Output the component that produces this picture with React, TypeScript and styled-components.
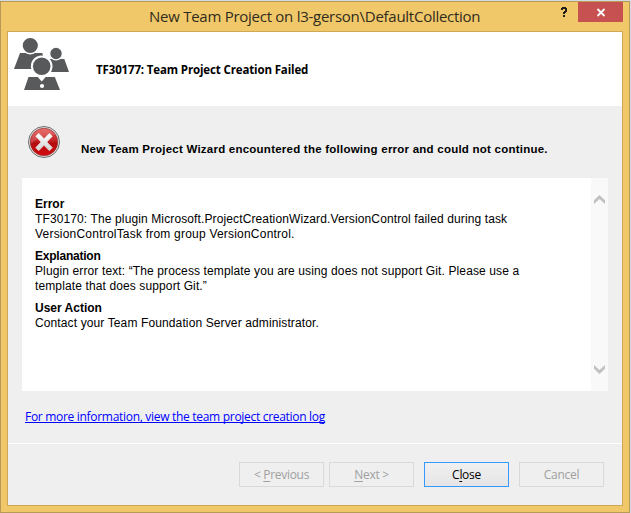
import React from "react";
import styled, { createGlobalStyle, css } from "styled-components";

const GlobalStyle = createGlobalStyle`
  * { box-sizing: border-box; }
  body { margin: 0; overflow: hidden; }
`;

const uiFont = css`font-family: "Open Sans", "Noto Sans", sans-serif;`;
const textFont = css`font-family: "Liberation Sans", Arial, sans-serif;`;

const Desktop = styled.div`
  width: 631px;
  height: 513px;
  padding: 1px 1px 0 0;
  background: #d5d9e0;
`;

const Window = styled.div`
  display: flex;
  flex-direction: column;
  height: 512px;
  padding: 0 6px 6px;
  border: 1px solid #b69a55;
  background: #f0c869;
`;

const TitleBar = styled.div`
  ${uiFont}
  display: flex;
  height: 29px;
  flex: none;
  color: #302b20;
`;

const Title = styled.h1`
  flex: 1;
  margin: 0;
  padding: 4px 0 0 142px;
  font-size: 15px;
  font-weight: 400;
  line-height: 21px;
  letter-spacing: -0.265px;
  white-space: nowrap;
`;

const HelpButton = styled.button`
  width: 28px;
  height: 20px;
  padding: 0;
  border: 0;
  background: none;
  line-height: 0;
`;

const CloseBox = styled.button`
  width: 45px;
  height: 20px;
  padding: 0;
  border: 0;
  background: #c75050;
  line-height: 0;
`;

const Client = styled.div`
  display: flex;
  flex: 1;
  flex-direction: column;
  border: 1px solid #cda956;
  background: #efefef;
`;

const Header = styled.header`
  display: flex;
  height: 74px;
  flex: none;
  background: #fff;
`;

const HeaderTitle = styled.h2`
  ${uiFont}
  margin: 0;
  padding: 28px 0 0 26px;
  font-size: 11.5px;
  font-weight: 700;
  line-height: 20px;
  letter-spacing: -0.14px;
  color: #000;
`;

const Message = styled.div`
  ${textFont}
  display: flex;
  height: 72px;
  flex: none;
  padding: 19px 0 0 19px;
  font-size: 11.5px;
  letter-spacing: 0.235px;
  font-weight: 700;
  line-height: 16px;
  white-space: nowrap;
`;

const MessageText = styled.p`
  margin: 0;
  padding: 16px 0 0 20px;
`;

const Panel = styled.section`
  display: flex;
  height: 213px;
  flex: none;
  margin: 0 14px;
  background: #fff;
`;

const Details = styled.div`
  ${textFont}
  flex: 1;
  padding: 19px 0 0 13px;
  font-size: 12px;
  line-height: 15px;
  color: #000;
  white-space: nowrap;
`;

const DetailBlock = styled.div`
  margin-bottom: 7px;
`;

const DetailHeading = styled.h3<{ $tight?: boolean }>`
  margin: 0;
  font-size: 12px;
  letter-spacing: ${(p) => (p.$tight ? "-0.22px" : "0")};
`;

const DetailLine = styled.p<{ $loose?: boolean }>`
  margin: 0;
  letter-spacing: ${(p) => (p.$loose ? "0.21px" : "0.12px")};
`;

const ScrollBar = styled.div`
  display: flex;
  width: 17px;
  flex-direction: column;
  justify-content: space-between;
  align-items: center;
  padding: 17px 0;
  background: #f9f9f9;
`;

const LinkRow = styled.div`
  ${uiFont}
  height: 52px;
  flex: none;
  padding: 17px 0 0 17px;
  font-size: 12px;
  line-height: 18px;
`;

const LogLink = styled.a`
  color: #0000ff;
  letter-spacing: -0.3px;
  text-decoration: underline;
  text-decoration-skip-ink: none;
  text-underline-offset: 1px;
  text-decoration-thickness: 1px;
`;

const Footer = styled.footer`
  display: flex;
  flex: 1;
  padding: 18px 18px 0 231px;
  border-top: 1px solid #fff;
`;

const Button = styled.button<{ $primary?: boolean; $gap?: number }>`
  ${uiFont}
  width: 85px;
  height: 25px;
  flex: none;
  margin: 0 0 0 ${(p) => p.$gap ?? 0}px;
  padding: 0;
  border: 1px solid ${(p) => (p.$primary ? "#3399ff" : "#d9d9d9")};
  background: ${(p) => (p.$primary ? "linear-gradient(#f0f0f0, #e5e5e5)" : "#efefef")};
  color: ${(p) => (p.$primary ? "#000" : "#a0a0a0")};
  font-size: 12px;
  line-height: 23px;
  letter-spacing: -0.3px;
`;

const Mnemonic = styled.span`
  text-decoration: underline;
  text-decoration-skip-ink: none;
  text-underline-offset: 2px;
  text-decoration-thickness: 1px;
`;

const TeamIcon = () => (
  <svg width="62" height="74" viewBox="8 32 62 74" fill="#58595b">
    <path d="M20 53h22.2l1 3-8 13H14z" />
    <path d="M49 59h15.3L69 72H51z" />
    <g stroke="#fff" strokeWidth="1.4">
      <circle cx="30.3" cy="45.5" r="8.3" />
      <circle cx="56" cy="53.5" r="6.4" />
    </g>
    <circle cx="41.7" cy="66.2" r="10.8" fill="#fff" />
    <circle cx="41.7" cy="66.2" r="8.8" />
    <path d="M28.5 77h9.2l4 4.4 4-4.4h9.1l5.2 13H24z" />
    <circle cx="42" cy="86" r="2.1" fill="#fff" />
  </svg>
);

const ErrorIcon = () => (
  <svg width="34" height="34" viewBox="0 0 34 34">
    <defs>
      <linearGradient id="errorRed" x1="0" y1="0" x2="0" y2="1">
        <stop offset="0" stopColor="#e2534f" />
        <stop offset=".45" stopColor="#c52225" />
        <stop offset=".55" stopColor="#b20b0e" />
        <stop offset="1" stopColor="#d40b10" />
      </linearGradient>
      <linearGradient id="errorCross" x1="0" y1="0" x2="0" y2="1">
        <stop offset="0" stopColor="#fff" />
        <stop offset="1" stopColor="#d2d2d2" />
      </linearGradient>
    </defs>
    <circle cx="17" cy="17" r="15.5" fill="#e7e7e7" stroke="#6d6d6d" />
    <circle cx="17" cy="17" r="13.8" fill="url(#errorRed)" stroke="#8d3032" strokeWidth=".6" />
    <path d="M4.4 19C2.5 10.4 9 4 17 4c5 0 9 2.3 11.3 6C20 10 10 12 4.4 19z" fill="#fff" opacity=".16" />
    <path
      d="M8.7 11.2l3-2.9 5.3 5.3 5.4-5.3 3 2.9-5.5 5.8 5.5 5.7-3 3-5.4-5.4-5.3 5.4-3-3 5.3-5.7z"
      fill="url(#errorCross)"
      stroke="#e6d6d6"
      strokeWidth=".7"
      strokeLinejoin="round"
    />
  </svg>
);

const HelpIcon = () => (
  <svg width="28" height="20" viewBox="0 0 28 20" fill="#221f18" shapeRendering="crispEdges">
    <path d="M12 5h4v1h1v4h-1v1h-1v1h-2v-2h1v-1h1V7h-2v1h-2V6h1zM13 13h2v2h-2z" />
  </svg>
);

const CloseIcon = () => (
  <svg width="45" height="20" viewBox="0 0 45 20">
    <path d="M19.5 7l7 7m0-7l-7 7" stroke="#fff" strokeWidth="1.8" />
  </svg>
);

const Chevron = ({ down }: { down?: boolean }) => (
  <svg width="11" height="9" viewBox="0 0 11 9" fill="#c1c1c1">
    <path d={down ? "M0 0l5.5 5L11 0v3.8L5.5 9 0 3.8z" : "M0 9l5.5-5L11 9V5.2L5.5 0 0 5.2z"} />
  </svg>
);

export default function App() {
  return (
    <Desktop>
      <GlobalStyle />
      <Window>
        <TitleBar>
          <Title>New Team Project on l3-gerson\DefaultCollection</Title>
          <HelpButton aria-label="Help"><HelpIcon /></HelpButton>
          <CloseBox aria-label="Close window"><CloseIcon /></CloseBox>
        </TitleBar>
        <Client>
          <Header>
            <TeamIcon />
            <HeaderTitle>TF30177: Team Project Creation Failed</HeaderTitle>
          </Header>
          <Message>
            <ErrorIcon />
            <MessageText>New Team Project Wizard encountered the following error and could not continue.</MessageText>
          </Message>
          <Panel>
            <Details>
              <DetailBlock>
                <DetailHeading>Error</DetailHeading>
                <DetailLine>TF30170: The plugin Microsoft.ProjectCreationWizard.VersionControl failed during task</DetailLine>
                <DetailLine $loose>VersionControlTask from group VersionControl.</DetailLine>
              </DetailBlock>
              <DetailBlock>
                <DetailHeading $tight>Explanation</DetailHeading>
                <DetailLine>Plugin error text: “The process template you are using does not support Git. Please use a</DetailLine>
                <DetailLine>template that does support Git.”</DetailLine>
              </DetailBlock>
              <DetailBlock>
                <DetailHeading>User Action</DetailHeading>
                <DetailLine>Contact your Team Foundation Server administrator.</DetailLine>
              </DetailBlock>
            </Details>
            <ScrollBar>
              <Chevron />
              <Chevron down />
            </ScrollBar>
          </Panel>
          <LinkRow>
            <LogLink href="#">For more information, view the team project creation log</LogLink>
          </LinkRow>
          <Footer>
            <Button disabled>&lt; <Mnemonic>P</Mnemonic>revious</Button>
            <Button disabled $gap={5}><Mnemonic>N</Mnemonic>ext &gt;</Button>
            <Button $primary $gap={10}>C<Mnemonic>l</Mnemonic>ose</Button>
            <Button disabled $gap={10}>Cancel</Button>
          </Footer>
        </Client>
      </Window>
    </Desktop>
  );
}
